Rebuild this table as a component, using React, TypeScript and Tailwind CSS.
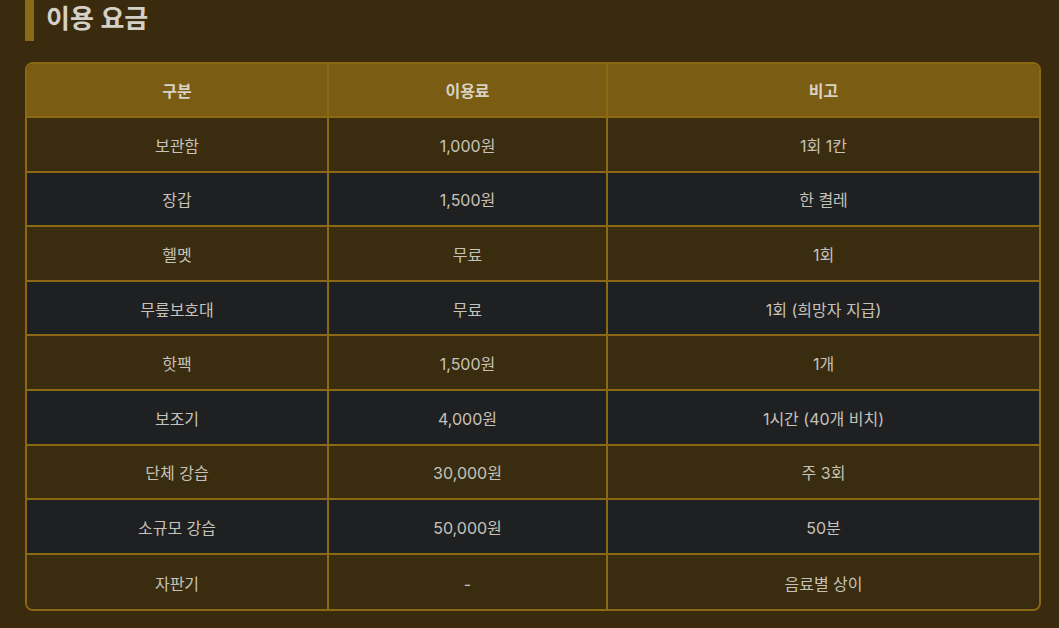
import React from "react";

const rows: [string, string, string][] = [
  ["보관함", "1,000원", "1회 1칸"],
  ["장갑", "1,500원", "한 켤레"],
  ["헬멧", "무료", "1회"],
  ["무릎보호대", "무료", "1회 (희망자 지급)"],
  ["핫팩", "1,500원", "1개"],
  ["보조기", "4,000원", "1시간 (40개 비치)"],
  ["단체 강습", "30,000원", "주 3회"],
  ["소규모 강습", "50,000원", "50분"],
  ["자판기", "-", "음료별 상이"],
];

export default function App() {
  return (
    <div
      className="w-[1059px] h-[628px] overflow-hidden bg-[#3a2b0e] text-[#c6c2ba]"
      style={{ fontFamily: 'Inter, "Noto Sans CJK KR", sans-serif' }}
    >
      <div className="ml-[25px] flex h-[41px] items-center border-l-[9px] border-[#8b6914] pl-[12px]">
        <h2 className="text-[26px] font-semibold leading-none text-[#d4d0c8] -mt-[3px]">이용 요금</h2>
      </div>
      <div className="ml-[25px] mt-[21px] w-[1016px] overflow-hidden rounded-lg border-2 border-[#8b6914]">
        <div className="grid grid-cols-[302px_279px_1fr] h-[54px] bg-[#7a5c12] text-[16px] font-bold text-[#d8d2c4]">
          <div className="flex items-center justify-center pt-[2px] border-r-2 border-b-2 border-[#8b6914]">구분</div>
          <div className="flex items-center justify-center pt-[2px] border-r-2 border-b-2 border-[#8b6914]">이용료</div>
          <div className="flex items-center justify-center pt-[2px] border-b-2 border-[#8b6914]">비고</div>
        </div>
        {rows.map((r, i) => {
          const last = i === rows.length - 1;
          const bg = i % 2 === 0 ? "bg-[#3a2c0e]" : "bg-[#1f2021]";
          const bb = last ? "" : "border-b-2";
          return (
            <div key={i} className={`grid grid-cols-[302px_279px_1fr] h-[54.6px] text-[16px] ${bg}`}>
              <div className={`flex items-center justify-center pt-[3px] border-r-2 border-[#8b6914] ${bb}`}>{r[0]}</div>
              <div className={`flex items-center justify-center pt-[3px] border-r-2 border-[#8b6914] ${bb}`}>{r[1]}</div>
              <div className={`flex items-center justify-center pt-[3px] border-[#8b6914] ${bb}`}>{r[2]}</div>
            </div>
          );
        })}
      </div>
    </div>
  );
}
